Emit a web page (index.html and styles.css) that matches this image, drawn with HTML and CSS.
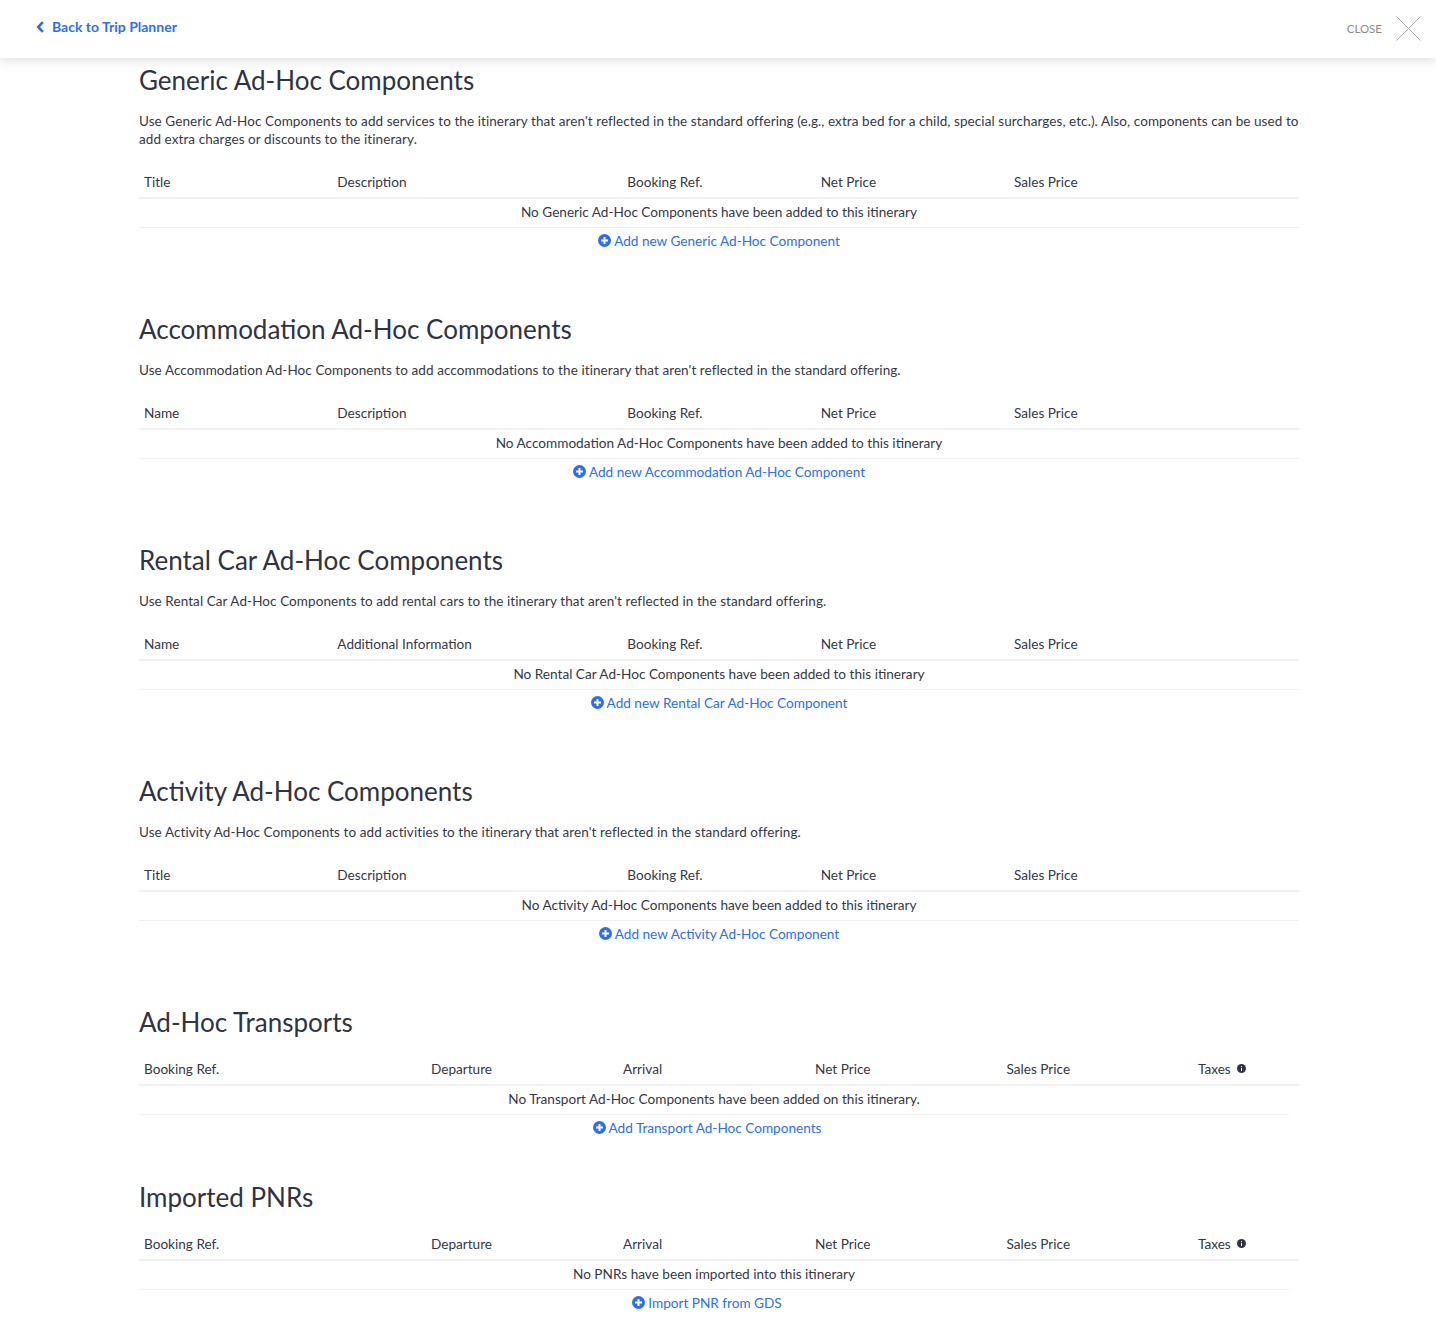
FILE: index.html
```html
<!DOCTYPE html>
<html lang="en">
<head>
<meta charset="utf-8">
<title>Ad-Hoc Components</title>
<link rel="stylesheet" href="styles.css">
</head>
<body>
<header class="topbar">
  <a class="back" href="#"><svg class="chev" viewBox="0 0 9 12" width="9" height="12"><path d="M6.8 1.2 2.2 6l4.6 4.8" fill="none" stroke="currentColor" stroke-width="2.6"/></svg>Back to Trip Planner</a>
  <a class="close" href="#"><span>CLOSE</span><svg viewBox="0 0 25 25" width="25" height="25"><path d="M.5.5l24 24M24.5.5l-24 24" fill="none" stroke="#a9a9a9" stroke-width="1"/></svg></a>
</header>
<main class="page">
  <section class="block">
    <h2>Generic Ad-Hoc Components</h2>
    <p class="intro">Use Generic Ad-Hoc Components to add services to the itinerary that aren't reflected in the standard offering (e.g., extra bed for a child, special surcharges, etc.). Also, components can be used to add extra charges or discounts to the itinerary.</p>
    <div class="row head five"><span>Title</span><span>Description</span><span>Booking Ref.</span><span>Net Price</span><span>Sales Price</span></div>
    <div class="empty">No Generic Ad-Hoc Components have been added to this itinerary</div>
    <a class="add" href="#"><svg class="plus" viewBox="0 0 13 13" width="13" height="13"><circle cx="6.5" cy="6.5" r="6.5" fill="currentColor"/><path d="M6.5 3v7M3 6.5h7" stroke="#fff" stroke-width="2"/></svg>Add new Generic Ad-Hoc Component</a>
  </section>
  <section class="block">
    <h2>Accommodation Ad-Hoc Components</h2>
    <p class="intro">Use Accommodation Ad-Hoc Components to add accommodations to the itinerary that aren't reflected in the standard offering.</p>
    <div class="row head five"><span>Name</span><span>Description</span><span>Booking Ref.</span><span>Net Price</span><span>Sales Price</span></div>
    <div class="empty">No Accommodation Ad-Hoc Components have been added to this itinerary</div>
    <a class="add" href="#"><svg class="plus" viewBox="0 0 13 13" width="13" height="13"><circle cx="6.5" cy="6.5" r="6.5" fill="currentColor"/><path d="M6.5 3v7M3 6.5h7" stroke="#fff" stroke-width="2"/></svg>Add new Accommodation Ad-Hoc Component</a>
  </section>
  <section class="block">
    <h2>Rental Car Ad-Hoc Components</h2>
    <p class="intro">Use Rental Car Ad-Hoc Components to add rental cars to the itinerary that aren't reflected in the standard offering.</p>
    <div class="row head five"><span>Name</span><span>Additional Information</span><span>Booking Ref.</span><span>Net Price</span><span>Sales Price</span></div>
    <div class="empty">No Rental Car Ad-Hoc Components have been added to this itinerary</div>
    <a class="add" href="#"><svg class="plus" viewBox="0 0 13 13" width="13" height="13"><circle cx="6.5" cy="6.5" r="6.5" fill="currentColor"/><path d="M6.5 3v7M3 6.5h7" stroke="#fff" stroke-width="2"/></svg>Add new Rental Car Ad-Hoc Component</a>
  </section>
  <section class="block">
    <h2>Activity Ad-Hoc Components</h2>
    <p class="intro">Use Activity Ad-Hoc Components to add activities to the itinerary that aren't reflected in the standard offering.</p>
    <div class="row head five"><span>Title</span><span>Description</span><span>Booking Ref.</span><span>Net Price</span><span>Sales Price</span></div>
    <div class="empty">No Activity Ad-Hoc Components have been added to this itinerary</div>
    <a class="add" href="#"><svg class="plus" viewBox="0 0 13 13" width="13" height="13"><circle cx="6.5" cy="6.5" r="6.5" fill="currentColor"/><path d="M6.5 3v7M3 6.5h7" stroke="#fff" stroke-width="2"/></svg>Add new Activity Ad-Hoc Component</a>
  </section>
  <section class="block tight">
    <h2>Ad-Hoc Transports</h2>
    <div class="row head six"><span>Booking Ref.</span><span>Departure</span><span>Arrival</span><span>Net Price</span><span>Sales Price</span><span>Taxes<svg class="info" viewBox="0 0 9 9" width="9" height="9"><circle cx="4.5" cy="4.5" r="4.5" fill="#2f3342"/><path d="M4.5 2.2v.9M4.5 3.9v3" stroke="#fff" stroke-width="1"/></svg></span></div>
    <div class="empty narrow">No Transport Ad-Hoc Components have been added on this itinerary.</div>
    <a class="add shifted" href="#"><svg class="plus" viewBox="0 0 13 13" width="13" height="13"><circle cx="6.5" cy="6.5" r="6.5" fill="currentColor"/><path d="M6.5 3v7M3 6.5h7" stroke="#fff" stroke-width="2"/></svg>Add Transport Ad-Hoc Components</a>
  </section>
  <section class="block tight">
    <h2>Imported PNRs</h2>
    <div class="row head six"><span>Booking Ref.</span><span>Departure</span><span>Arrival</span><span>Net Price</span><span>Sales Price</span><span>Taxes<svg class="info" viewBox="0 0 9 9" width="9" height="9"><circle cx="4.5" cy="4.5" r="4.5" fill="#2f3342"/><path d="M4.5 2.2v.9M4.5 3.9v3" stroke="#fff" stroke-width="1"/></svg></span></div>
    <div class="empty narrow">No PNRs have been imported into this itinerary</div>
    <a class="add shifted" href="#"><svg class="plus" viewBox="0 0 13 13" width="13" height="13"><circle cx="6.5" cy="6.5" r="6.5" fill="currentColor"/><path d="M6.5 3v7M3 6.5h7" stroke="#fff" stroke-width="2"/></svg>Import PNR from GDS</a>
  </section>
</main>
</body>
</html>
```
FILE: styles.css
```css
* { box-sizing: border-box; }
html, body { margin: 0; padding: 0; }
body {
  font-family: Lato, "Noto Sans", sans-serif;
  font-size: 13px;
  color: #353846;
  background: #fff;
}
a { text-decoration: none; }
.topbar {
  height: 58px;
  display: flex;
  justify-content: space-between;
  align-items: center;
  padding: 0 15px 0 36px;
  background: #fff;
  box-shadow: 0 2px 12px rgba(0, 0, 0, .14);
}
.back {
  display: flex;
  align-items: center;
  gap: 7px;
  margin-top: -5px;
  font-weight: 700;
  font-size: 14px;
  color: #2b6ff3;
}
.chev { flex: none; }
.close {
  display: flex;
  align-items: center;
  gap: 14px;
  margin-top: -2px;
  font-size: 11.5px;
  color: #8b8b8b;
}
.close span { margin-top: 1px; }
.page {
  padding: 8px 137px 0 139px;
}
.block { margin-bottom: 60px; }
.block.tight { margin-bottom: 41px; }
.block.tight:last-child { margin-bottom: 0; }
h2 {
  margin: 0;
  font-size: 26px;
  line-height: 28px;
  padding-bottom: 2px;
  font-weight: 400;
  color: #2f3342;
}
.intro {
  margin: 16px 0 20px;
  line-height: 18px;
  font-size: 13.5px;
  letter-spacing: .08px;
}
.tight h2 { margin-bottom: 17px; }
.row {
  display: grid;
  font-size: 13.6px;
}
.row span { padding: 0 5px; }
.five { grid-template-columns: 193.33px 290px 193.33px 193.33px 290px; }
.six { grid-template-columns: 287px 192px 192px 191.5px 191.5px 106px; }
.head {
  height: 31px;
  padding-top: 5px;
  line-height: 19px;
  border-bottom: 2px solid #f1f1f1;
}
.empty {
  height: 29px;
  line-height: 26px;
  text-align: center;
  font-size: 13.6px;
  border-bottom: 1px solid #f1f1f1;
}
.empty.narrow { width: 1150px; }
.add {
  display: flex;
  justify-content: center;
  align-items: center;
  gap: 3px;
  height: 27px;
  padding-bottom: 2px;
  font-size: 13.6px;
  color: #2b6ff3;
}
.add.shifted { width: 1136px; }
.plus { flex: none; }
.info { margin: 0 0 5px 6px; vertical-align: middle; }
```
